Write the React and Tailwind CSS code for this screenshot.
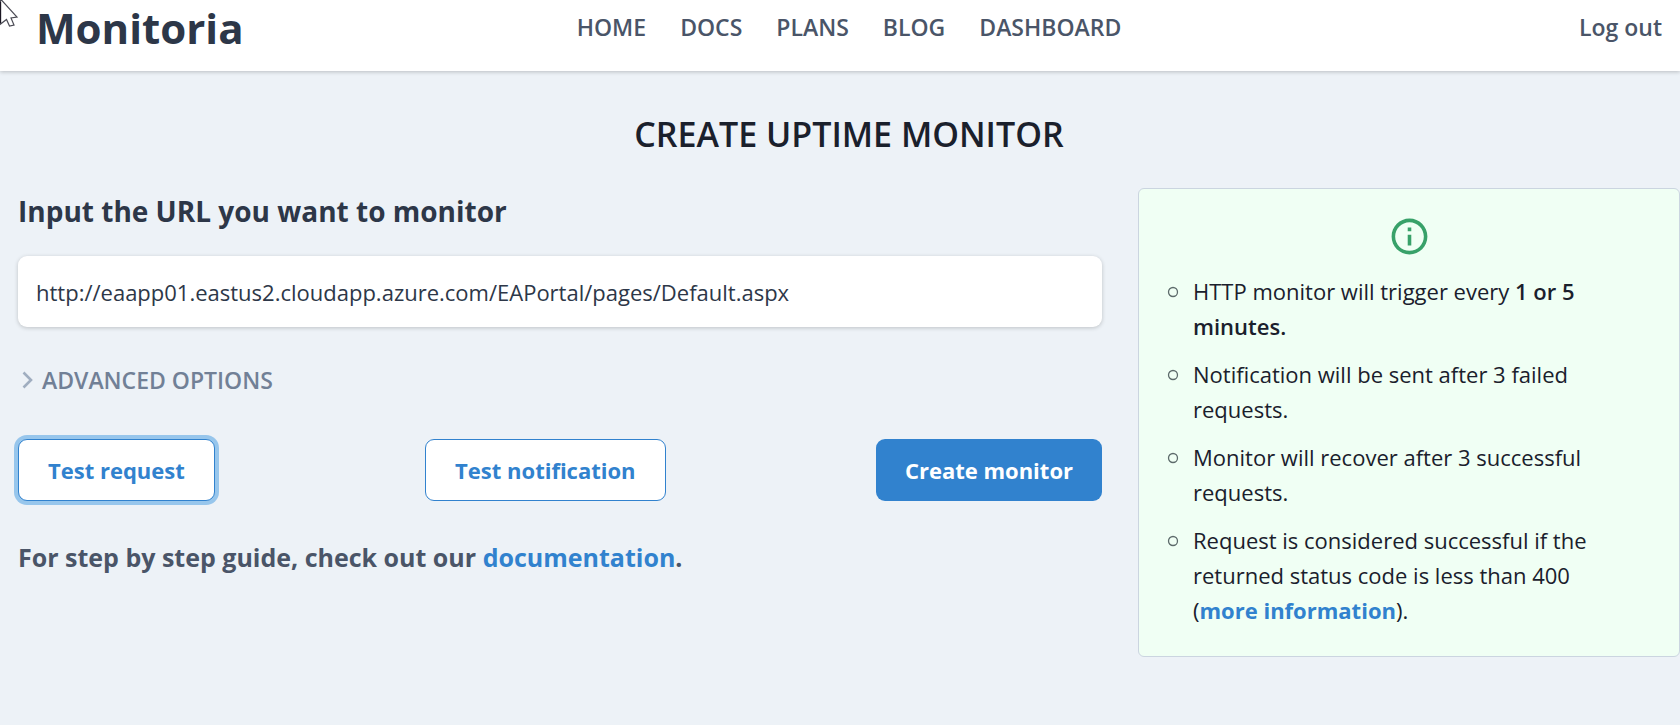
const navLinks = ["HOME", "DOCS", "PLANS", "BLOG", "DASHBOARD"];

function Header() {
  return (
    <header className="relative grid h-[71px] grid-cols-[1fr_auto_1fr] items-start bg-white pl-9 pr-[18px] shadow-[0_1px_4px_rgba(0,0,0,0.22)]">
      <a href="#" className="text-[42px] leading-[56px] font-bold text-[#2d3748]">
        Monitoria
      </a>
      <nav className="flex gap-[34px] text-[23px] leading-[55px] font-semibold text-[#4a5568]">
        {navLinks.map((label) => (
          <a key={label} href="#">
            {label}
          </a>
        ))}
      </nav>
      <a href="#" className="justify-self-end text-[23px] leading-[55px] font-semibold text-[#4a5568]">
        Log out
      </a>
    </header>
  );
}

function Pointer() {
  return (
    <svg className="pointer-events-none absolute top-0 left-0 z-10" width="20" height="30" viewBox="0 0 20 30" aria-hidden="true">
      <path d="M0.5 -1 L17 17 L11 18 L14 25 L9.500 26 L6.500 19.500 L0.500 24 Z" fill="#fff" stroke="#4b4b55" strokeWidth="1.200" />
      <path d="M0.500 2 V23" stroke="#1a1622" strokeWidth="1.200" />
    </svg>
  );
}

function InfoIcon() {
  return (
    <svg className="mx-auto size-[43px]" viewBox="0 0 24 24" fill="#38a169" aria-hidden="true">
      <path d="M11 7h2v2h-2zm0 4h2v6h-2zm1-9C6.480 2 2 6.480 2 12s4.480 10 10 10 10-4.480 10-10S17.520 2 12 2zm0 18c-4.410 0-8-3.590-8-8s3.590-8 8-8 8 3.590 8 8-3.590 8-8 8z" />
    </svg>
  );
}

function Note({ children }) {
  return (
    <li className="flex gap-[14px]">
      <svg className="mt-3 size-3 shrink-0" viewBox="0 0 12 12" aria-hidden="true">
        <circle cx="6" cy="6" r="4.500" fill="none" stroke="#5d6b6b" strokeWidth="1.300" />
      </svg>
      <span>{children}</span>
    </li>
  );
}

function MonitorForm() {
  return (
    <form onSubmit={(e) => e.preventDefault()}>
      <label htmlFor="url" className="block text-[28px] leading-[46px] font-bold text-[#2d3748]">
        Input the URL you want to monitor
      </label>
      <input
        id="url"
        type="text"
        defaultValue="http://eaapp01.eastus2.cloudapp.azure.com/EAPortal/pages/Default.aspx"
        className="mt-[22px] block h-[71px] w-full rounded-[9px] bg-white px-[18px] text-[22px] text-[#2d3748] shadow-[0_1px_4px_rgba(0,0,0,0.2)] outline-none"
      />
      <button type="button" className="mt-[35px] flex h-9 items-center gap-[9px] pl-1 text-[23px] font-semibold text-[#718096]">
        <svg className="h-[18px] w-[11px]" viewBox="0 0 11 18" fill="none" stroke="#a0aec0" strokeWidth="2.600" aria-hidden="true">
          <path d="M1.500 1.500 L9 9 L1.500 16.500" />
        </svg>
        ADVANCED OPTIONS
      </button>
      <div className="mt-[41px] flex justify-between text-[22px] font-bold">
        <button type="button" className="h-[62px] rounded-[9px] border border-[#3182ce] bg-white px-[29px] text-[#3182ce] shadow-[0_0_0_4px_rgba(66,153,225,0.5)]">
          Test request
        </button>
        <button type="button" className="h-[62px] rounded-[9px] border border-[#3182ce] bg-white px-[29px] text-[#3182ce]">
          Test notification
        </button>
        <button type="submit" className="h-[62px] rounded-[9px] bg-[#3182ce] px-[29px] text-white">
          Create monitor
        </button>
      </div>
      <p className="mt-[35px] text-[25px] leading-[42px] font-bold text-[#4a5568]">
        For step by step guide, check out our{" "}
        <a href="#" className="text-[#3182ce]">
          documentation
        </a>
        .
      </p>
    </form>
  );
}

export default function App() {
  return (
    <div className="min-h-screen bg-[#edf2f7] font-['Open_Sans',sans-serif] text-[#1a202c]">
      <Pointer />
      <Header />
      <main className="pl-[18px]">
        <h1 className="pt-9 text-center text-[34px] leading-[54px] font-semibold">CREATE UPTIME MONITOR</h1>
        <div className="mt-[27px] grid grid-cols-[2fr_1fr] items-start gap-9">
          <MonitorForm />
          <aside className="rounded-[6px] border border-[#cbd5e0] bg-[#f0fff4] px-7 pt-[26px] pb-7">
            <InfoIcon />
            <ul className="mt-4 flex flex-col gap-[13px] pr-[50px] text-[22px] leading-[35px]">
              <Note>
                HTTP monitor will trigger every <strong className="font-semibold">1 or 5 minutes.</strong>
              </Note>
              <Note>Notification will be sent after 3 failed requests.</Note>
              <Note>Monitor will recover after 3 successful requests.</Note>
              <Note>
                Request is considered successful if the returned status code is less than 400 (
                <a href="#" className="font-bold text-[#3182ce]">
                  more information
                </a>
                ).
              </Note>
            </ul>
          </aside>
        </div>
      </main>
    </div>
  );
}
